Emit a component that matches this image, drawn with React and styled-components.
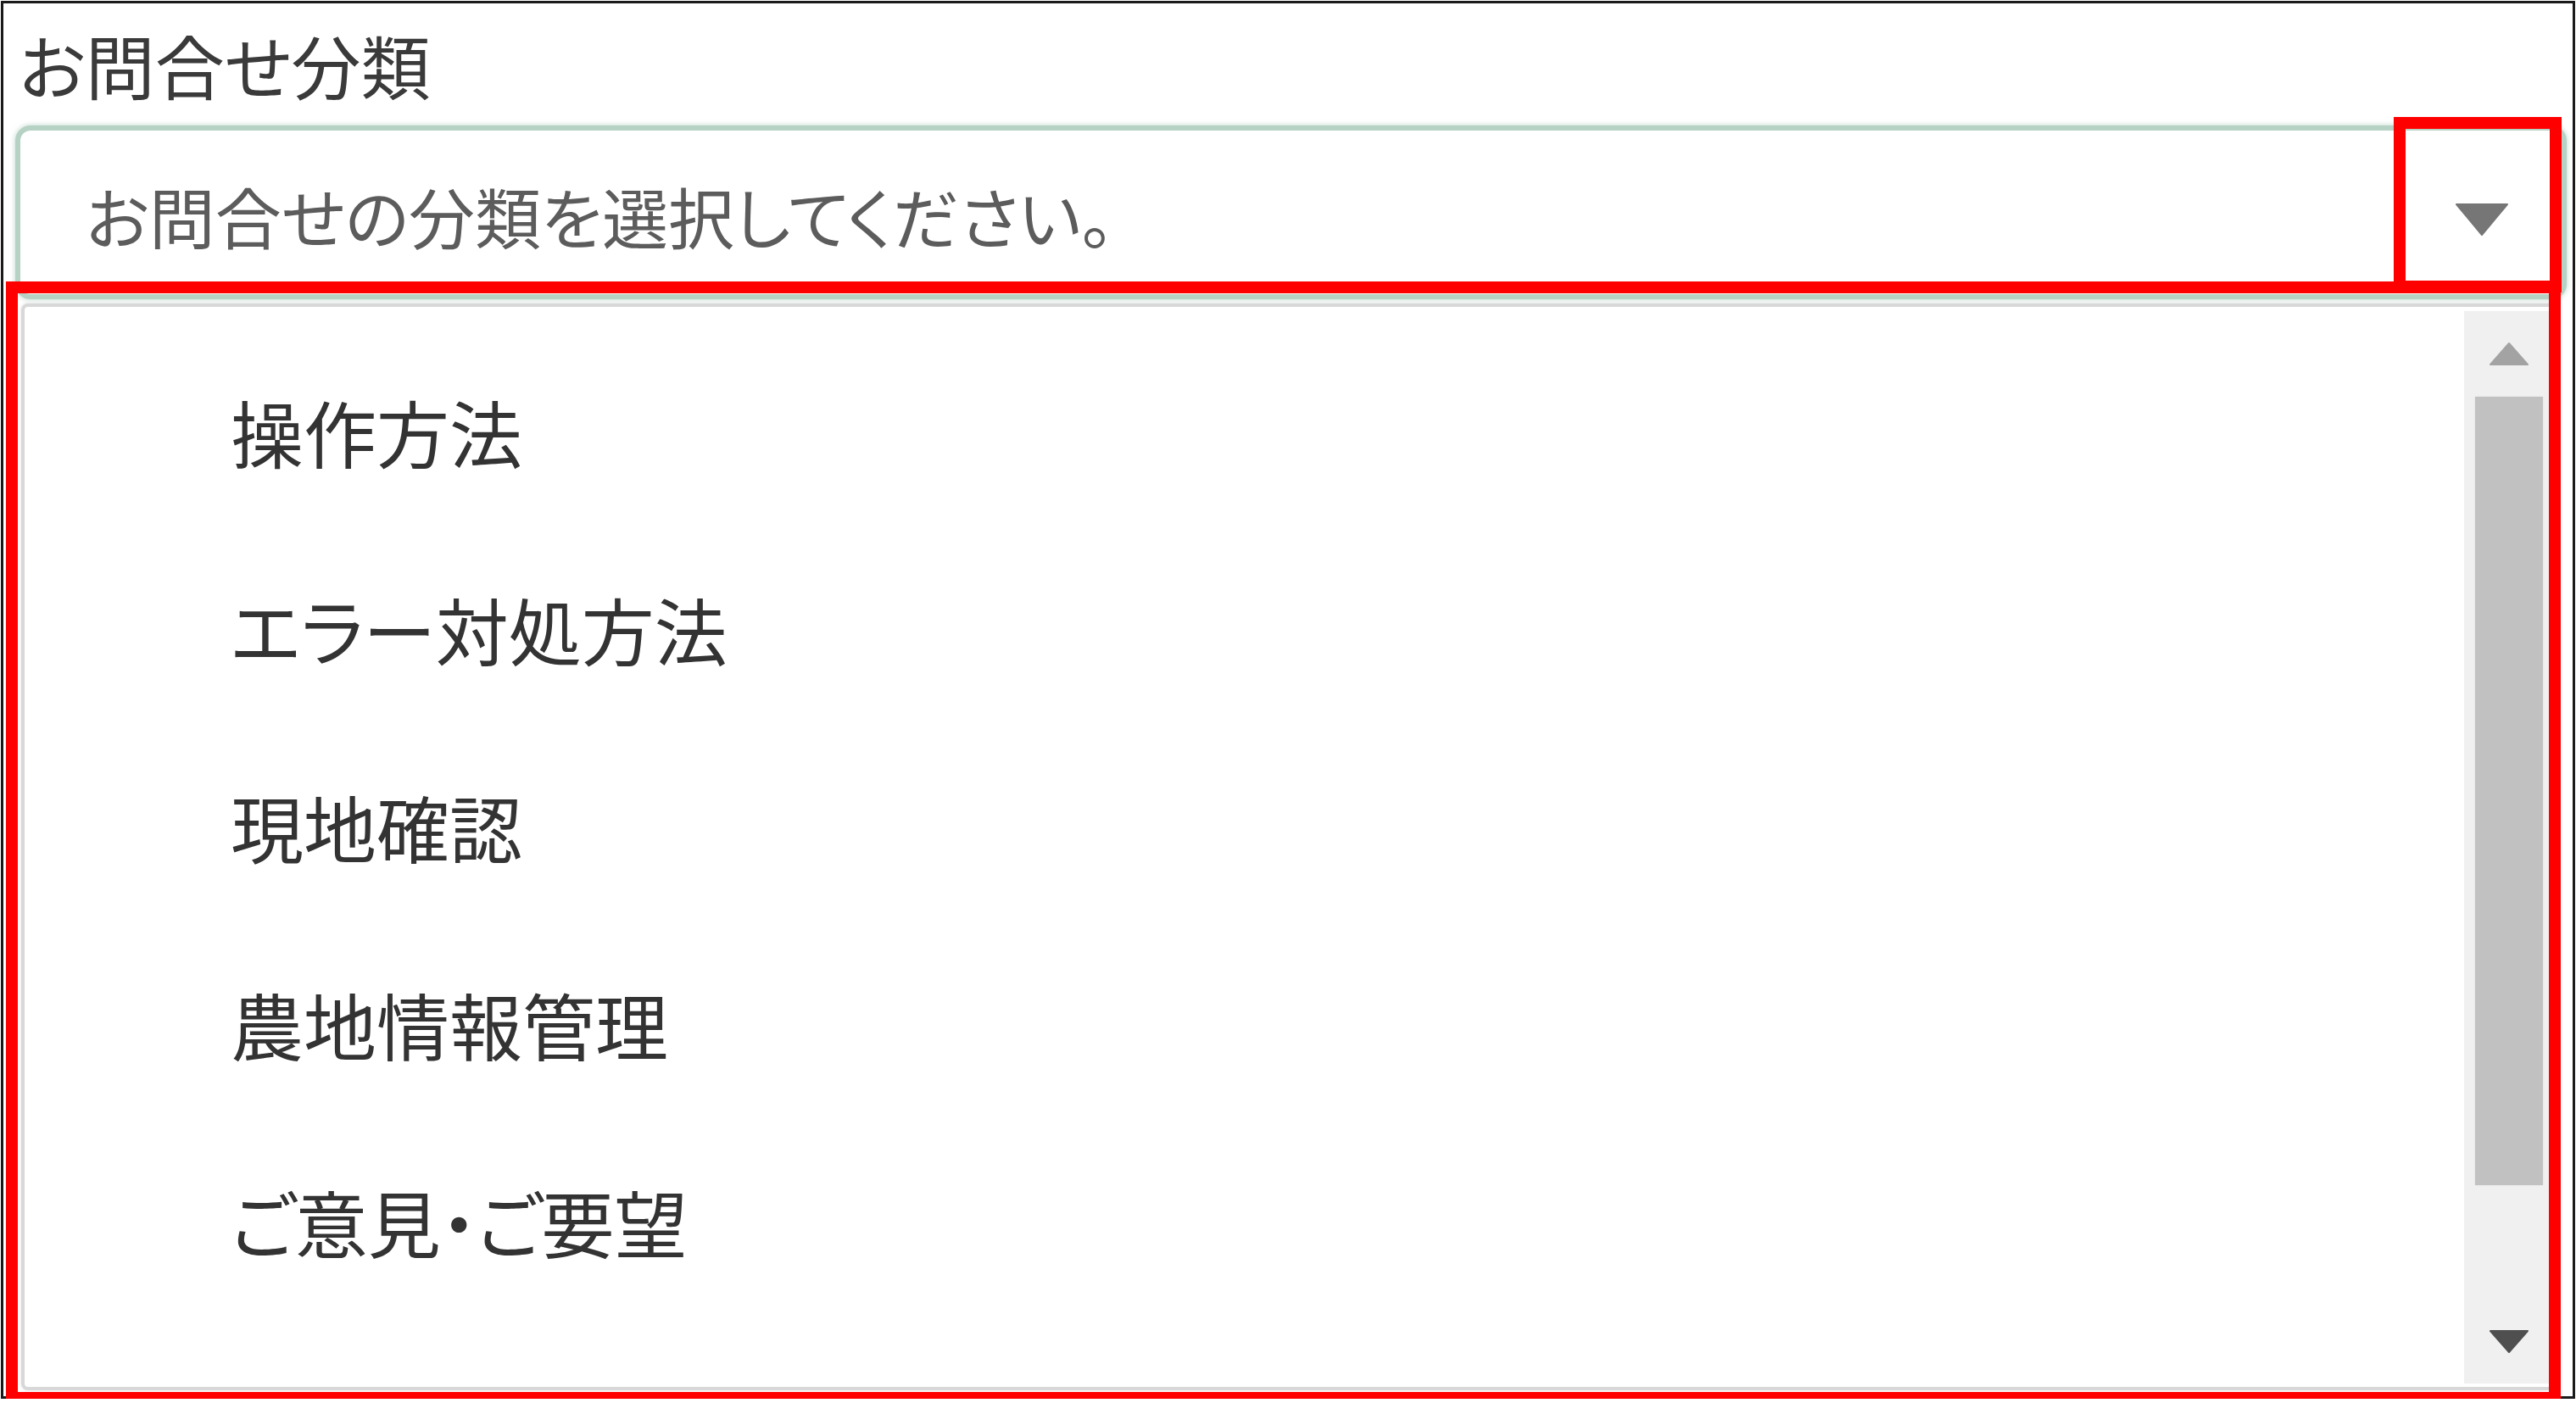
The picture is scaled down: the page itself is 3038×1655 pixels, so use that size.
import React from "react";
import styled, { createGlobalStyle } from "styled-components";

const Global = createGlobalStyle`
  html, body {
    margin: 0;
    padding: 0;
    background: #ffffff;
    overflow: hidden;
  }
  body {
    font-family: "Noto Sans CJK JP", "Noto Sans", sans-serif;
  }
`;

const Frame = styled.div`
  position: relative;
  box-sizing: border-box;
  width: 3036px;
  height: 1649px;
  margin: 1px 0 0 1px;
  border: 3px solid #1a1a1a;
  background: #ffffff;
  padding: 31px 7px 0 14px;
  display: flex;
  flex-direction: column;
`;

const Label = styled.div`
  font-size: 82px;
  line-height: 1;
  color: #3a3a3a;
  font-feature-settings: "palt";
  padding-left: 4px;
`;

const SelectBox = styled.div`
  box-sizing: border-box;
  margin-top: 31px;
  height: 205px;
  display: flex;
  align-items: center;
  border: 6px solid #b6d2c4;
  border-radius: 18px;
  box-shadow: 0 0 6px rgba(140, 185, 165, 0.6);
  background: #ffffff;
  padding: 6px 0 0 77px;
`;

const Placeholder = styled.span`
  flex: 1;
  font-size: 78px;
  line-height: 1;
  color: #5c5c5c;
  font-feature-settings: "palt";
  white-space: nowrap;
`;

const ArrowZone = styled.div`
  width: 188px;
  height: 100%;
  display: flex;
  align-items: center;
  justify-content: center;
  margin-top: 10px;
`;

const Dropdown = styled.div`
  box-sizing: border-box;
  margin: 5px 0 0 7px;
  width: 2991px;
  height: 1282px;
  border: 4px solid #d8d8d8;
  border-radius: 8px;
  box-shadow: 0 0 4px rgba(0, 0, 0, 0.12);
  background: #ffffff;
  padding: 5px 0 4px 0;
  display: flex;
`;

const List = styled.ul`
  flex: 1;
  list-style: none;
  margin: 0;
  padding: 25px 0 0 0;
  overflow: hidden;
`;

const Item = styled.li`
  height: 233px;
  display: flex;
  align-items: center;
  padding-left: 243px;
  font-size: 86px;
  line-height: 1;
  color: #333333;
  font-feature-settings: "palt";
  white-space: nowrap;
`;

const Scrollbar = styled.div`
  width: 106px;
  background: #f0f0f0;
  display: flex;
  flex-direction: column;
`;

const ScrollButton = styled.div`
  height: 100px;
  display: flex;
  align-items: center;
  justify-content: center;
`;

const Track = styled.div`
  flex: 1;
  padding-top: 1px;
`;

const Thumb = styled.div`
  margin-left: 13px;
  width: 80px;
  height: ${(p) => p.$size}px;
  background: #c1c1c1;
  box-shadow: 0 0 2px rgba(0, 0, 0, 0.08);
`;

const Highlight = styled.div`
  position: absolute;
  box-sizing: border-box;
  left: ${(p) => p.$x}px;
  top: ${(p) => p.$y}px;
  width: ${(p) => p.$w}px;
  height: ${(p) => p.$h}px;
  border: 14px solid #ff0000;
  pointer-events: none;
`;

const Triangle = ({ w, h, color, up }) => (
  <svg width={w} height={h} viewBox={`0 0 ${w} ${h}`}>
    <polygon
      points={up ? `${w / 2},1 ${w - 1},${h - 1} 1,${h - 1}` : `1,1 ${w - 1},1 ${w / 2},${h - 1}`}
      fill={color}
      stroke={color}
      strokeWidth="2"
      strokeLinejoin="round"
    />
  </svg>
);

const options = ["操作方法", "エラー対処方法", "現地確認", "農地情報管理", "ご意見・ご要望"];

export default function App() {
  return (
    <>
      <Global />
      <Frame>
        <Label>お問合せ分類</Label>
        <SelectBox>
          <Placeholder>お問合せの分類を選択してください。</Placeholder>
          <ArrowZone>
            <Triangle w={62} h={38} color="#767676" />
          </ArrowZone>
        </SelectBox>
        <Dropdown>
          <List>
            {options.map((o) => (
              <Item key={o}>{o}</Item>
            ))}
          </List>
          <Scrollbar>
            <ScrollButton>
              <Triangle w={46} h={27} color="#a3a3a3" up />
            </ScrollButton>
            <Track>
              <Thumb $size={930} />
            </Track>
            <ScrollButton>
              <Triangle w={46} h={27} color="#4f4f4f" />
            </ScrollButton>
          </Scrollbar>
        </Dropdown>
        <Highlight $x={3} $y={328} $w={3013} $h={1324} />
        <Highlight $x={2819} $y={134} $w={198} $h={207} />
      </Frame>
    </>
  );
}
